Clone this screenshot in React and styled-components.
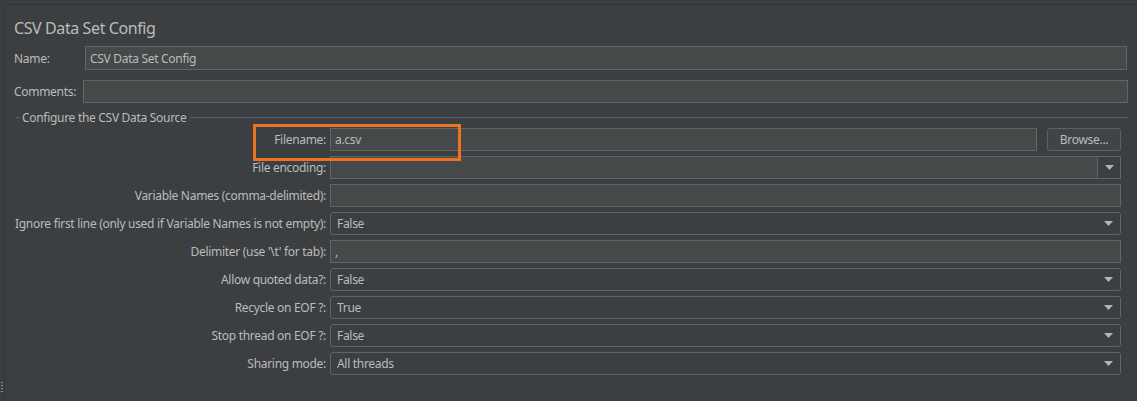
import React from "react";
import styled, { createGlobalStyle, css } from "styled-components";

const GlobalStyle = createGlobalStyle`
  html, body {
    margin: 0;
    padding: 0;
    background: #3c3f41;
  }
  body {
    font-family: "Noto Sans", "Open Sans", sans-serif;
    font-size: 12px;
    letter-spacing: -0.3px;
    color: #bbbbbb;
  }
`;

const Page = styled.div`
  width: 1137px;
  height: 401px;
  display: flex;
  background: #3c3f41;
  overflow: hidden;
  padding-top: 4px;
  box-sizing: border-box;
`;

const Gutter = styled.div`
  width: 4px;
  display: flex;
  flex-direction: column;
  justify-content: flex-end;
  padding-bottom: 8px;
  box-sizing: border-box;
`;

const Grip = styled.div`
  width: 2px;
  height: 11px;
  margin-left: 1px;
  background: repeating-linear-gradient(
    to bottom,
    #8a8d90 0,
    #8a8d90 1px,
    transparent 1px,
    transparent 3px
  );
`;

const Panel = styled.div`
  flex: 1;
  border-top: 1px solid #323436;
  border-left: 1px solid #323436;
  padding: 12px 9px 0 9px;
  box-sizing: border-box;
`;

const Title = styled.div`
  font-size: 16px;
  letter-spacing: -0.4px;
  line-height: 22px;
  height: 24px;
  margin-bottom: 5px;
`;

const TopRow = styled.div`
  display: flex;
  align-items: center;
  height: 24px;
  margin-top: ${p => p.$mt || 0}px;
`;

const TopLabel = styled.div`
  width: ${p => p.$w}px;
  flex: none;
`;

const fieldBase = css`
  box-sizing: border-box;
  height: ${p => p.$h || 23}px;
  border: 1px solid #646464;
  background: #45494a;
  color: #bbbbbb;
  display: flex;
  align-items: center;
  padding-left: 4px;
  white-space: nowrap;
`;

const TextField = styled.div`
  ${fieldBase}
  flex: 1;
  margin-right: ${p => p.$mr || 0}px;
`;

const Legend = styled.div`
  display: flex;
  align-items: center;
  margin: 7px 0 0 2px;
  height: 15px;
`;

const LegendLine = styled.div`
  height: 1px;
  background: #5b5e60;
  flex: ${p => (p.$grow ? 1 : "none")};
  width: ${p => (p.$grow ? "auto" : "4px")};
`;

const LegendText = styled.span`
  padding: 0 3px 0 2px;
  white-space: nowrap;
`;

const Form = styled.div`
  display: grid;
  grid-template-columns: 312px 791px;
  column-gap: 4px;
  row-gap: 5px;
  margin-top: 3px;
  position: relative;
`;

const Label = styled.div`
  text-align: right;
  align-self: center;
  white-space: nowrap;
`;

const FileRow = styled.div`
  display: flex;
  gap: 10px;
`;

const Button = styled.div`
  box-sizing: border-box;
  width: 74px;
  height: 23px;
  border: 1px solid #5e6060;
  border-radius: 3px;
  background: #414446;
  display: flex;
  align-items: center;
  justify-content: center;
`;

const Combo = styled.div`
  ${fieldBase}
  padding-left: 6px;
  border-radius: ${p => (p.$editable ? 0 : 3)}px;
  background: ${p => (p.$editable ? "#45494a" : "#3c3f41")};
  padding-right: 0;
`;

const ComboValue = styled.span`
  flex: 1;
`;

const ArrowBox = styled.div`
  width: 23px;
  height: 100%;
  display: flex;
  align-items: center;
  justify-content: center;
  border-left: ${p => (p.$split ? "1px solid #646464" : "none")};
  background: ${p => (p.$split ? "#3c3f41" : "transparent")};
  box-sizing: border-box;
`;

const Highlight = styled.div`
  position: absolute;
  top: -4px;
  width: 208px;
  height: 37px;
  border: 3px solid #ef7220;
  box-sizing: border-box;
  pointer-events: none;
`;

const Arrow = () => (
  <svg width="9" height="5" viewBox="0 0 9 5">
    <path d="M0 0h9L4.5 5z" fill="#b4b4b4" />
  </svg>
);

const Select = ({ value }) => (
  <Combo>
    <ComboValue>{value}</ComboValue>
    <ArrowBox>
      <Arrow />
    </ArrowBox>
  </Combo>
);

const rows = [
  ["Ignore first line (only used if Variable Names is not empty):", "False", true],
  ["Delimiter (use '\\t' for tab):", ",", false],
  ["Allow quoted data?:", "False", true],
  ["Recycle on EOF ?:", "True", true],
  ["Stop thread on EOF ?:", "False", true],
  ["Sharing mode:", "All threads", true],
];

export default function App() {
  return (
    <>
      <GlobalStyle />
      <Page>
        <Gutter>
          <Grip />
        </Gutter>
        <Panel>
          <Title>CSV Data Set Config</Title>
          <TopRow>
            <TopLabel $w={71}>Name:</TopLabel>
            <TextField $h={24} $mr={1}>CSV Data Set Config</TextField>
          </TopRow>
          <TopRow $mt={9}>
            <TopLabel $w={69}>Comments:</TopLabel>
            <TextField $h={23} />
          </TopRow>
          <Legend>
            <LegendLine />
            <LegendText>Configure the CSV Data Source</LegendText>
            <LegendLine $grow />
          </Legend>
          <Form>
            <Label>Filename:</Label>
            <FileRow>
              <TextField>a.csv</TextField>
              <Button>Browse...</Button>
            </FileRow>
            <Label>File encoding:</Label>
            <Combo $editable>
              <ComboValue />
              <ArrowBox $split>
                <Arrow />
              </ArrowBox>
            </Combo>
            <Label>Variable Names (comma-delimited):</Label>
            <TextField />
            {rows.map(([label, value, isSelect]) => (
              <React.Fragment key={label}>
                <Label>{label}</Label>
                {isSelect ? <Select value={value} /> : <TextField>{value}</TextField>}
              </React.Fragment>
            ))}
            <Highlight style={{ left: 239 }} />
          </Form>
        </Panel>
      </Page>
    </>
  );
}
